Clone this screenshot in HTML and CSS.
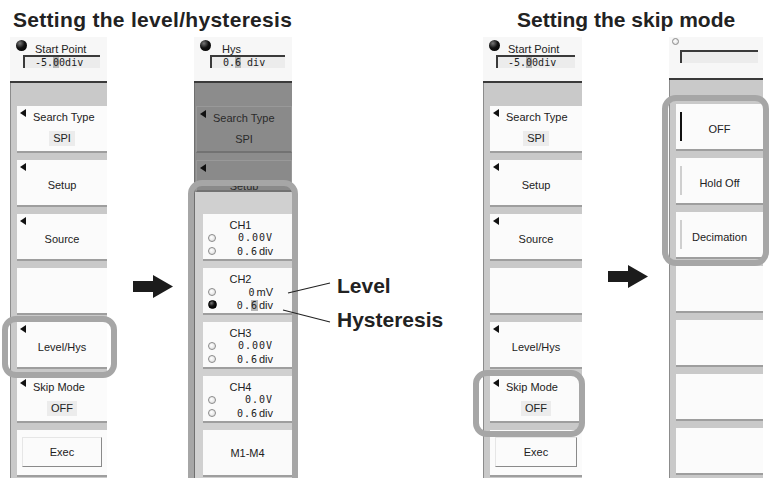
FILE: index.html
```html
<!DOCTYPE html>
<html lang="en">
<head>
    <meta charset="UTF-8">
    <meta name="viewport" content="width=device-width, initial-scale=1.0">
    <title>Search settings</title>
    <link rel="stylesheet" href="styles.css">
</head>
<body>

<div class="figure">

    <!-- level / hysteresis -->
    <section class="half half-a">
        <h2 class="title">Setting the level/hysteresis</h2>
        <div class="stage">

            <div class="panel panel-1">
                <div class="head">
                    <span class="ball"></span>
                    <div class="head-label">Start Point</div>
                    <div class="value-box">-5.<span class="cursor">0</span>0div</div>
                </div>
                <div class="body">
                    <div class="btn tri">
                        <div class="pair-title">Search Type</div>
                        <div class="pair-value">SPI</div>
                    </div>
                    <div class="btn tri"><div class="btn-label">Setup</div></div>
                    <div class="btn tri"><div class="btn-label">Source</div></div>
                    <div class="btn"></div>
                    <div class="btn tri"><div class="btn-label">Level/Hys</div></div>
                    <div class="btn tri">
                        <div class="pair-title">Skip Mode</div>
                        <div class="pair-value">OFF</div>
                    </div>
                    <div class="btn btn-exec"><div class="exec">Exec</div></div>
                </div>
                <div class="ring ring-level"></div>
            </div>

            <svg class="arrow arrow-a" width="40" height="23" viewBox="0 0 40 23">
                <polygon points="0,6 20,6 20,0 40,11.5 20,23 20,17 0,17" fill="#1c1c1c"/>
            </svg>

            <div class="panel panel-2">
                <div class="head">
                    <span class="ball"></span>
                    <div class="head-label">Hys</div>
                    <div class="value-box">0.<span class="cursor">6</span> div</div>
                </div>
                <div class="body">
                    <div class="btn tri dim">
                        <div class="pair-title">Search Type</div>
                        <div class="pair-value">SPI</div>
                    </div>
                    <div class="btn tri dim cut"><div class="btn-label">Setup</div></div>
                    <div class="popup">
                        <div class="ch">
                            <div class="ch-name">CH1</div>
                            <div class="ch-row"><span class="dot"></span><span class="val">0.00V</span></div>
                            <div class="ch-row"><span class="dot"></span><span class="val">0.6<small>div</small></span></div>
                        </div>
                        <div class="ch">
                            <div class="ch-name">CH2</div>
                            <div class="ch-row"><span class="dot"></span><span class="val">0<small>mV</small></span></div>
                            <div class="ch-row"><span class="dot dot-on"></span><span class="val">0.<span class="cursor">6</span><small>div</small></span></div>
                        </div>
                        <div class="ch">
                            <div class="ch-name">CH3</div>
                            <div class="ch-row"><span class="dot"></span><span class="val">0.00V</span></div>
                            <div class="ch-row"><span class="dot"></span><span class="val">0.6<small>div</small></span></div>
                        </div>
                        <div class="ch">
                            <div class="ch-name">CH4</div>
                            <div class="ch-row"><span class="dot"></span><span class="val">0.0V</span></div>
                            <div class="ch-row"><span class="dot"></span><span class="val">0.6<small>div</small></span></div>
                        </div>
                        <div class="ch ch-m"><div class="btn-label">M1-M4</div></div>
                    </div>
                </div>
                <div class="ring ring-popup"></div>
            </div>

            <div class="callouts">
                <svg class="leaders" width="55" height="50" viewBox="0 0 55 50">
                    <line x1="6" y1="15" x2="48" y2="5" stroke="#222" stroke-width="1.2"/>
                    <line x1="1" y1="32" x2="48" y2="44" stroke="#222" stroke-width="1.2"/>
                </svg>
                <div class="callout-labels">
                    <span>Level</span>
                    <span>Hysteresis</span>
                </div>
            </div>

        </div>
    </section>

    <!-- skip mode -->
    <section class="half half-b">
        <h2 class="title">Setting the skip mode</h2>
        <div class="stage">

            <div class="panel panel-3">
                <div class="head">
                    <span class="ball"></span>
                    <div class="head-label">Start Point</div>
                    <div class="value-box">-5.<span class="cursor">0</span>0div</div>
                </div>
                <div class="body">
                    <div class="btn tri">
                        <div class="pair-title">Search Type</div>
                        <div class="pair-value">SPI</div>
                    </div>
                    <div class="btn tri"><div class="btn-label">Setup</div></div>
                    <div class="btn tri"><div class="btn-label">Source</div></div>
                    <div class="btn"></div>
                    <div class="btn tri"><div class="btn-label">Level/Hys</div></div>
                    <div class="btn tri">
                        <div class="pair-title">Skip Mode</div>
                        <div class="pair-value">OFF</div>
                    </div>
                    <div class="btn btn-exec"><div class="exec">Exec</div></div>
                </div>
                <div class="ring ring-skip"></div>
            </div>

            <svg class="arrow arrow-b" width="40" height="23" viewBox="0 0 40 23">
                <polygon points="0,6 20,6 20,0 40,11.5 20,23 20,17 0,17" fill="#1c1c1c"/>
            </svg>

            <div class="panel panel-4">
                <div class="head">
                    <span class="dot dot-head"></span>
                    <div class="value-box"></div>
                </div>
                <div class="body">
                    <div class="btn opt on"><div class="btn-label">OFF</div></div>
                    <div class="btn opt"><div class="btn-label">Hold Off</div></div>
                    <div class="btn opt"><div class="btn-label">Decimation</div></div>
                    <div class="btn"></div>
                    <div class="btn"></div>
                    <div class="btn"></div>
                    <div class="btn"></div>
                </div>
                <div class="ring ring-options"></div>
            </div>

        </div>
    </section>

</div>

</body>
</html>
```

FILE: styles.css
```css
* {
    box-sizing: border-box;
}

body {
    margin: 0;
    background-color: #fff;
    font-family: "Liberation Sans", Arial, sans-serif;
    color: #222;
}

.figure {
    display: flex;
    width: 771px;
    height: 478px;
    overflow: hidden;
}

.half-a {
    width: 470px;
    flex: none;
}

.half-b {
    flex: 1;
}

.title {
    margin: 0;
    height: 37px;
    padding: 8px 0 0 13px;
    font-size: 21px;
    line-height: 24px;
    font-weight: bold;
    color: #222;
    white-space: nowrap;
}

.half-a .title {
    letter-spacing: 0.3px;
}

.half-b .title {
    padding-left: 47px;
}

.stage {
    display: flex;
    align-items: flex-start;
}

/* panels */
.panel {
    position: relative;
    display: flex;
    flex-direction: column;
    height: 441px;
    flex: none;
    font-family: "Liberation Sans", Arial, sans-serif;
    font-size: 11px;
}

.panel-1 {
    width: 97px;
    margin-left: 10px;
}

.panel-2 {
    width: 98px;
    margin-left: 21px;
}

.panel-3 {
    width: 99px;
    margin-left: 13px;
}

.panel-4 {
    width: 94px;
    margin-left: 21px;
}

.head {
    position: relative;
    height: 46px;
    flex: none;
    background-color: #f7f7f7;
    border-bottom: 2px solid #3a3a3a;
    padding: 7px 7px 0 13px;
}

.panel-2 .head {
    padding-left: 16px;
}

.panel-4 .head {
    height: 43px;
    padding: 13px 5px 0 11px;
}

.ball {
    position: absolute;
    left: 6px;
    top: 3px;
    width: 11px;
    height: 11px;
    border-radius: 50%;
    background: radial-gradient(circle at 35% 30%, #777 0, #111 45%, #000 100%);
}

.head-label {
    height: 11px;
    line-height: 11px;
    padding-left: 12px;
    white-space: nowrap;
}

.value-box {
    height: 13px;
    border-top: 2px solid #3a3a3a;
    border-left: 2px solid #3a3a3a;
    background-color: #ececec;
    padding-left: 10px;
    font-family: "DejaVu Sans Mono", monospace;
    font-size: 10px;
    line-height: 11px;
    white-space: nowrap;
}

.panel-2 .value-box {
    padding-left: 11px;
}

.cursor {
    background-color: #b8b8b8;
}

.body {
    flex: 1;
    display: flex;
    flex-direction: column;
    gap: 7px;
    background-color: #c9c9c9;
    border-left: 1px solid #8c8c8c;
    padding: 23px 0 0 6px;
    overflow: hidden;
}

.panel-4 .body {
    padding-top: 24px;
}

/* soft keys */
.btn {
    position: relative;
    flex: none;
    height: 47px;
    background-color: #fbfbfb;
    border-bottom: 2px solid #9e9e9e;
}

.tri::before {
    content: "";
    position: absolute;
    left: 3px;
    top: 3px;
    border-style: solid;
    border-width: 4px 6px 4px 0;
    border-color: transparent #111 transparent transparent;
}

.btn-label {
    display: flex;
    height: 100%;
    align-items: center;
    justify-content: center;
    padding-top: 4px;
    white-space: nowrap;
}

.pair-title {
    padding: 5px 0 0 16px;
    line-height: 12px;
    white-space: nowrap;
}

.pair-value {
    width: fit-content;
    margin: 8px auto 0;
    padding: 1px 4px;
    line-height: 13px;
    background-color: #ececec;
}

.btn-exec {
    padding: 7px 5px 0;
}

.exec {
    display: flex;
    height: 30px;
    align-items: center;
    justify-content: center;
    background-color: #fbfbfb;
    border: 1px solid;
    border-color: #e6e6e6 #8a8a8a #8a8a8a #e6e6e6;
}

/* dimmed panel behind the popup */
.panel-2 .body {
    background-color: #8c8c8c;
    border-left-color: #6f6f6f;
    padding-left: 1px;
}

.btn.dim {
    background-color: #8a8a8a;
    border: 1px solid #999;
    border-bottom: 2px solid #727272;
    color: #2a2a2a;
}

.btn.dim .pair-value {
    background-color: transparent;
}

.btn.cut {
    height: 32px;
    overflow: hidden;
}

.btn.cut .btn-label {
    display: block;
    height: auto;
    text-align: center;
    padding-top: 19px;
    line-height: 12px;
}

.popup {
    flex: 1;
    display: flex;
    flex-direction: column;
    gap: 7px;
    margin: -7px 0 0 -1px;
    padding: 22px 0 0 8px;
    background-color: #d0d0d0;
}

.ch {
    flex: none;
    height: 47px;
    background-color: #fafafa;
    border-bottom: 2px solid #9e9e9e;
    padding: 5px 19px 0 5px;
}

.ch-name {
    text-align: center;
    line-height: 12px;
}

.ch-row {
    display: flex;
    align-items: center;
    justify-content: space-between;
    height: 13px;
}

.val {
    font-family: "DejaVu Sans Mono", monospace;
    font-size: 10px;
    letter-spacing: 1px;
    white-space: nowrap;
}

.val small {
    font-family: "Liberation Sans", Arial, sans-serif;
    font-size: 11px;
    letter-spacing: 0;
    margin-left: 1px;
}

.dot {
    display: inline-block;
    width: 8px;
    height: 8px;
    border-radius: 50%;
    border: 1px solid #8a8a8a;
    background: radial-gradient(circle at 40% 40%, #fff 0, #e4e4e4 70%);
}

.dot.dot-on {
    width: 9px;
    height: 9px;
    border-color: #000;
    background: radial-gradient(circle at 35% 30%, #777 0, #111 45%, #000 100%);
}

.dot-head {
    position: absolute;
    left: 3px;
    top: 1px;
    width: 7px;
    height: 7px;
}

.ch-m {
    padding: 0;
}

.ch-m .btn-label {
    padding-top: 0;
    height: 45px;
}

/* option keys */
.opt::before {
    content: "";
    position: absolute;
    left: 4px;
    top: 8px;
    bottom: 8px;
    width: 2px;
    background-color: #cfcfcf;
}

.opt.on::before {
    background-color: #111;
}

/* highlight rings */
.ring {
    position: absolute;
    border: 6px solid #a6a6a6;
    border-radius: 14px;
    pointer-events: none;
}

.ring-level {
    left: -8px;
    top: 279px;
    width: 115px;
    height: 62px;
}

.ring-popup {
    left: -6px;
    top: 143px;
    width: 110px;
    height: 340px;
}

.ring-skip {
    left: -10px;
    top: 333px;
    width: 112px;
    height: 67px;
}

.ring-options {
    left: -7px;
    top: 58px;
    width: 107px;
    height: 171px;
}

/* arrows and callouts */
.arrow {
    flex: none;
}

.arrow-a {
    margin: 238px 0 0 26px;
}

.arrow-b {
    margin: 228px 0 0 26px;
}

.callouts {
    position: relative;
    z-index: 2;
    display: flex;
    flex: none;
    margin: 237px 0 0 -10px;
}

.leaders {
    margin-top: 4px;
}

.callout-labels {
    display: flex;
    flex-direction: column;
    gap: 10px;
    font-size: 21px;
    line-height: 24px;
    font-weight: bold;
    color: #222;
}
```
